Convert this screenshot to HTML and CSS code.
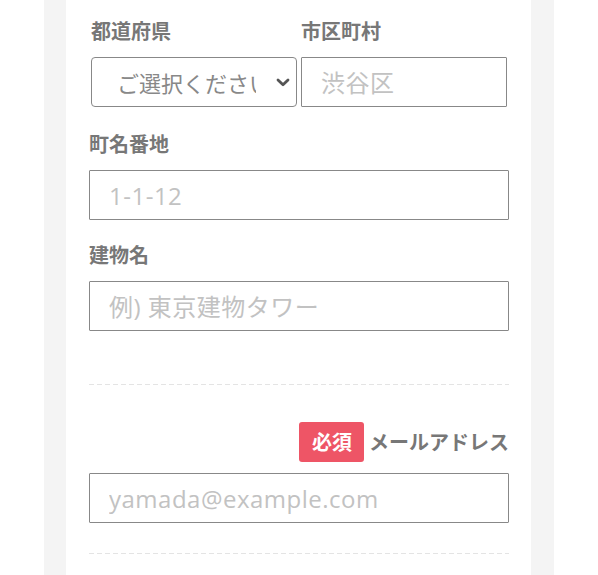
FILE: index.html
```html
<!DOCTYPE html>
<html lang="ja">
<head>
  <meta charset="UTF-8">
  <meta name="viewport" content="width=device-width, initial-scale=1.0">
  <title>お届け先情報</title>
  <link rel="stylesheet" href="styles.css">
</head>
<body>

  <div class="page">
    <form class="card" onsubmit="return false;">
      <div class="row-2">
        <div class="col">
          <label class="label" for="pref">都道府県</label>
          <div class="select-wrap">
            <select id="pref" name="pref" class="select">
              <option value="">ご選択ください</option>
              <option>東京都</option>
              <option>神奈川県</option>
              <option>大阪府</option>
            </select>
            <svg class="chevron" width="14" height="9" viewBox="0 0 14 9" aria-hidden="true">
              <polyline points="2,2 7,6.8 12,2" fill="none" stroke="#555" stroke-width="2.8" stroke-linecap="round" stroke-linejoin="round"/>
            </svg>
          </div>
        </div>
        <div class="col">
          <label class="label" for="city">市区町村</label>
          <input type="text" id="city" name="city" class="input" placeholder="渋谷区" autocomplete="off">
        </div>
      </div>

      <div class="field field-street">
        <label class="label" for="street">町名番地</label>
        <input type="text" id="street" name="street" class="input" placeholder="1-1-12" autocomplete="off">
      </div>

      <div class="field field-building">
        <label class="label" for="building">建物名</label>
        <input type="text" id="building" name="building" class="input" placeholder="例) 東京建物タワー" autocomplete="off">
      </div>

      <div class="divider"></div>

      <div class="field field-email">
        <div class="label-row">
          <span class="badge">必須</span>
          <label class="label" for="email">メールアドレス</label>
        </div>
        <input type="email" id="email" name="email" class="input" placeholder="yamada@example.com" required autocomplete="off">
      </div>

      <div class="divider divider-end"></div>
    </form>
  </div>

</body>
</html>
```

FILE: styles.css
```css
body {
  margin: 0;
  padding: 0;
  background: #fff;
  font-family: 'Noto Sans CJK JP', sans-serif;
}
.page {
  width: 465px;
  margin-left: 44px;
  padding: 0 23px 0 22px;
  background: #f4f4f4;
  min-height: 575px;
}
.card {
  background: #fff;
  padding: 17px 22px 22px 23px;
  min-height: 575px;
  box-sizing: border-box;
}
.label {
  display: block;
  font-size: 20px;
  line-height: 28px;
  font-weight: bold;
  color: #777;
  margin-bottom: 12px;
}
.row-2 {
  display: grid;
  grid-template-columns: 1fr 1fr;
}
.col {
  padding: 0 2px;
}
.select-wrap {
  position: relative;
}
.select {
  display: block;
  width: 100%;
  height: 50px;
  margin: 0;
  padding: 0 40px 0 25px;
  border: 1px solid #888;
  border-radius: 4px;
  background: #fff;
  font-family: inherit;
  font-size: 22px;
  color: #888;
  appearance: none;
  -webkit-appearance: none;
  box-sizing: border-box;
}
.chevron {
  position: absolute;
  right: 7px;
  top: 21px;
  pointer-events: none;
}
.input {
  display: block;
  width: 100%;
  height: 50px;
  margin: 0;
  padding: 0 19px;
  border: 1px solid #888;
  border-radius: 1px;
  font-family: 'Open Sans', 'Noto Sans CJK JP', sans-serif;
  font-size: 24px;
  letter-spacing: 0.5px;
  color: #555;
  box-sizing: border-box;
}
.input::placeholder {
  color: #c2c2c2;
}
.field-street {
  margin-top: 23px;
}
.field-building {
  margin-top: 21px;
}
.divider {
  height: 1px;
  margin-top: 53px;
  background: repeating-linear-gradient(90deg, #e4e4e4 0 5px, transparent 5px 8px);
}
.field-email {
  margin-top: 37px;
}
.label-row {
  display: flex;
  justify-content: flex-end;
  align-items: center;
  gap: 5px;
  margin-bottom: 11px;
}
.label-row .label {
  margin-bottom: 0;
}
.badge {
  display: inline-block;
  height: 40px;
  line-height: 40px;
  padding: 0 12px 0 13px;
  background: #ee5566;
  color: #fff;
  font-size: 20px;
  font-weight: bold;
  border-radius: 3px;
}
.divider-end {
  margin-top: 30px;
}
```
